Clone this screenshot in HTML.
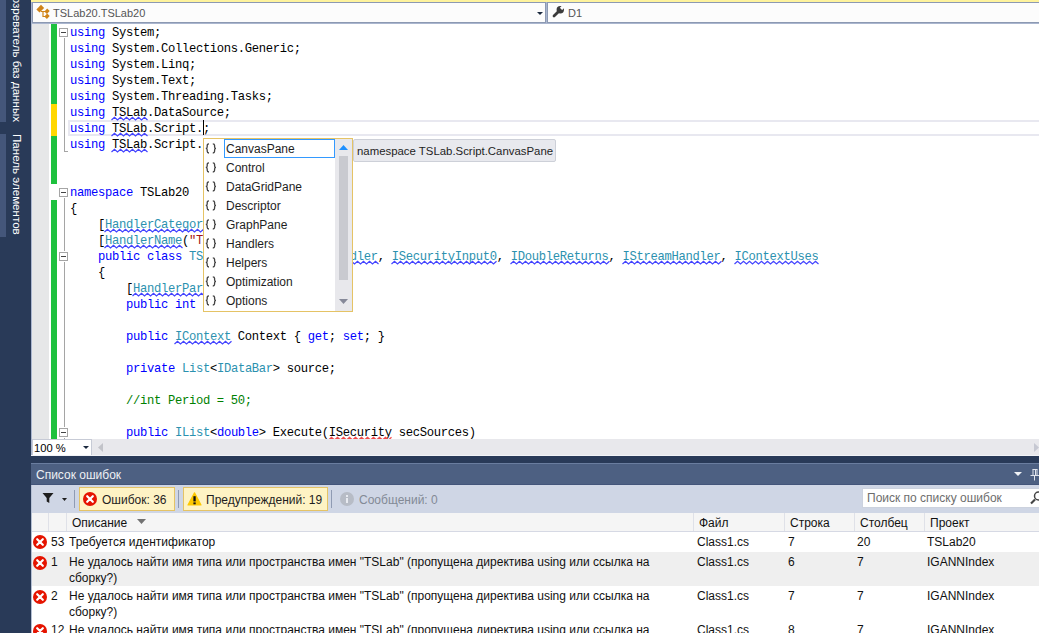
<!DOCTYPE html>
<html><head><meta charset="utf-8">
<style>
*{margin:0;padding:0;box-sizing:border-box}
html,body{width:1039px;height:633px;overflow:hidden;background:#293a58;font-family:"Liberation Sans",sans-serif;font-size:12px;position:relative}
.a{position:absolute}
.vt{position:absolute;color:#ffffff;font-size:12px;line-height:14px;white-space:nowrap;transform-origin:0 0;transform:rotate(90deg)}
.code{position:absolute;left:70px;top:25px;font-family:"Liberation Mono",monospace;font-size:12.2px;letter-spacing:-0.32px;line-height:16px;white-space:pre;color:#000}
.k{color:#0000ff}.t{color:#2b91af}.s{color:#a31515}.c{color:#008000}
.pi{font-family:"Liberation Mono",monospace;font-size:12px;line-height:19px;color:#424242;letter-spacing:2px}
.pt{line-height:21px;color:#1e1e1e}
.hdr{position:absolute;top:514px;line-height:18px;color:#111}
.cell{position:absolute;line-height:20px;color:#111}
</style></head><body>
<div class="a" style="left:0;top:0;width:6px;height:122px;background:#44567a"></div>
<div class="a" style="left:0;top:134px;width:6px;height:103px;background:#44567a"></div>
<div class="vt" style="left:24px;top:-19px;font-size:11.6px">Обозреватель баз данных</div>
<div class="vt" style="left:24px;top:134px;font-size:11.6px">Панель элементов</div>
<div class="a" style="left:31px;top:0;width:1008px;height:456px;background:#aab6cf"></div>
<div class="a" style="left:31px;top:0;width:1008px;height:2px;background:#fef39d"></div>
<div class="a" style="left:32px;top:2px;width:514px;height:21px;border:1px solid #8c99b2;background:#fcfcfc"></div>
<div class="a" style="left:547px;top:2px;width:492px;height:21px;border:1px solid #8c99b2;border-right:none;background:#fcfcfc"></div>
<svg class="a" style="left:35px;top:4px" width="16" height="16" viewBox="0 0 16 16"><g fill="#d08419"><rect x="2" y="2.5" width="6.5" height="4.5" transform="rotate(-45 5.2 4.7)"/><rect x="10" y="5.5" width="4" height="3.5" transform="rotate(-45 12 7.2)"/><rect x="10" y="10.5" width="4" height="3.5" transform="rotate(-45 12 12.2)"/></g><path d="M6 7.5 H11 M8 7.5 V12.5 H11" stroke="#d08419" stroke-width="1.2" fill="none"/></svg>
<div class="a" style="left:53px;top:5px;line-height:17px;color:#555;font-size:11px">TSLab20.TSLab20</div>
<svg class="a" style="left:537px;top:12px" width="6" height="3"><path d="M0 0 H6 L3 3 Z" fill="#1b293e"/></svg>
<svg class="a" style="left:552px;top:5px" width="13" height="13" viewBox="0 0 13 13"><path d="M2 11 L6.3 6.7" stroke="#3b3b3b" stroke-width="2.8" stroke-linecap="round"/><circle cx="8.3" cy="4.7" r="3.7" fill="#3b3b3b"/><rect x="9" y="0" width="3.2" height="4.6" fill="#fcfcfc" transform="rotate(45 10.6 2.3)"/></svg>
<div class="a" style="left:568px;top:5px;line-height:17px;color:#555;font-size:11px">D1</div>
<div class="a" style="left:32px;top:24px;width:1007px;height:415px;background:#fff;overflow:hidden">
</div>
<div class="a" style="left:32px;top:24px;width:17px;height:415px;background:#e6e7e8"></div>
<div class="a" style="left:51px;top:24px;width:6px;height:80px;background:#1ec13e"></div>
<div class="a" style="left:51px;top:104px;width:6px;height:32px;background:#ffd700"></div>
<div class="a" style="left:51px;top:136px;width:6px;height:48px;background:#1ec13e"></div>
<div class="a" style="left:51px;top:200px;width:6px;height:239px;background:#1ec13e"></div>
<div class="a" style="left:68px;top:120px;width:980px;height:16px;border:2px solid #e8e8f0;border-right:none"></div>
<div class="a" style="left:64px;top:37px;width:1px;height:115px;background:#a5a5a5"></div>
<div class="a" style="left:64px;top:151px;width:4px;height:1px;background:#a5a5a5"></div>
<div class="a" style="left:64px;top:197px;width:1px;height:242px;background:#a5a5a5"></div>
<div class="a" style="left:59px;top:28px;width:9px;height:9px;border:1px solid #a5a5a5;background:#fff;box-shadow:0 0 0 1px #fff"></div><div class="a" style="left:61px;top:32px;width:5px;height:1px;background:#444"></div>
<div class="a" style="left:59px;top:188px;width:9px;height:9px;border:1px solid #a5a5a5;background:#fff;box-shadow:0 0 0 1px #fff"></div><div class="a" style="left:61px;top:192px;width:5px;height:1px;background:#444"></div>
<div class="a" style="left:59px;top:252px;width:9px;height:9px;border:1px solid #a5a5a5;background:#fff;box-shadow:0 0 0 1px #fff"></div><div class="a" style="left:61px;top:256px;width:5px;height:1px;background:#444"></div>
<div class="a" style="left:59px;top:428px;width:9px;height:9px;border:1px solid #a5a5a5;background:#fff;box-shadow:0 0 0 1px #fff"></div><div class="a" style="left:61px;top:432px;width:5px;height:1px;background:#444"></div>
<div class="code" style="height:415px;overflow:hidden"><span class="k">using</span> System;
<span class="k">using</span> System.Collections.Generic;
<span class="k">using</span> System.Linq;
<span class="k">using</span> System.Text;
<span class="k">using</span> System.Threading.Tasks;
<span class="k">using</span> TSLab.DataSource;
<span class="k">using</span> TSLab.Script.;
<span class="k">using</span> TSLab.Script.Optimization;


<span class="k">namespace</span> TSLab20
{
    [<span class="t">HandlerCategory</span>("TSLab")]
    [<span class="t">HandlerName</span>(<span class="s">"TSLab20"</span>)]
    <span class="k">public</span> <span class="k">class</span> <span class="t">TSLab20</span> : <span class="t">IOneSourceHandler</span>, <span class="t">ISecurityInput0</span>, <span class="t">IDoubleReturns</span>, <span class="t">IStreamHandler</span>, <span class="t">IContextUses</span>
    {
        [<span class="t">HandlerParameter</span>(true)]
        <span class="k">public</span> <span class="k">int</span> Period

        <span class="k">public</span> <span class="t">IContext</span> Context { <span class="k">get</span>; <span class="k">set</span>; }

        <span class="k">private</span> <span class="t">List</span>&lt;<span class="t">IDataBar</span>&gt; source;

<span class="c">        //int Period = 50;</span>

        <span class="k">public</span> <span class="t">IList</span>&lt;<span class="k">double</span>&gt; Execute(ISecurity secSources)</div>
<svg class="a" style="left:0;top:0;overflow:visible" width="1039" height="439"><polyline points="111.5,120.0 114.5,117.3 117.5,120.0 120.5,117.3 123.5,120.0 126.5,117.3 129.5,120.0 132.5,117.3 135.5,120.0 138.5,117.3 141.5,120.0 144.5,117.3 147.5,120.0" fill="none" stroke="#4343ff" stroke-width="1.25"/>
<polyline points="111.5,136.0 114.5,133.3 117.5,136.0 120.5,133.3 123.5,136.0 126.5,133.3 129.5,136.0 132.5,133.3 135.5,136.0 138.5,133.3 141.5,136.0 144.5,133.3 147.5,136.0" fill="none" stroke="#4343ff" stroke-width="1.25"/>
<polyline points="111.5,152.0 114.5,149.3 117.5,152.0 120.5,149.3 123.5,152.0 126.5,149.3 129.5,152.0 132.5,149.3 135.5,152.0 138.5,149.3 141.5,152.0 144.5,149.3 147.5,152.0" fill="none" stroke="#4343ff" stroke-width="1.25"/>
<polyline points="104.5,232.0 107.5,229.3 110.5,232.0 113.5,229.3 116.5,232.0 119.5,229.3 122.5,232.0 125.5,229.3 128.5,232.0 131.5,229.3 134.5,232.0 137.5,229.3 140.5,232.0 143.5,229.3 146.5,232.0 149.5,229.3 152.5,232.0 155.5,229.3 158.5,232.0 161.5,229.3 164.5,232.0 167.5,229.3 170.5,232.0 173.5,229.3 176.5,232.0 179.5,229.3 182.5,232.0 185.5,229.3 188.5,232.0 191.5,229.3 194.5,232.0 197.5,229.3 200.5,232.0 203.5,229.3 206.5,232.0 209.5,229.3" fill="none" stroke="#4343ff" stroke-width="1.25"/>
<polyline points="104.5,248.0 107.5,245.3 110.5,248.0 113.5,245.3 116.5,248.0 119.5,245.3 122.5,248.0 125.5,245.3 128.5,248.0 131.5,245.3 134.5,248.0 137.5,245.3 140.5,248.0 143.5,245.3 146.5,248.0 149.5,245.3 152.5,248.0 155.5,245.3 158.5,248.0 161.5,245.3 164.5,248.0 167.5,245.3 170.5,248.0 173.5,245.3 176.5,248.0 179.5,245.3 182.5,248.0" fill="none" stroke="#4343ff" stroke-width="1.25"/>
<polyline points="258.5,264.0 261.5,261.3 264.5,264.0 267.5,261.3 270.5,264.0 273.5,261.3 276.5,264.0 279.5,261.3 282.5,264.0 285.5,261.3 288.5,264.0 291.5,261.3 294.5,264.0 297.5,261.3 300.5,264.0 303.5,261.3 306.5,264.0 309.5,261.3 312.5,264.0 315.5,261.3 318.5,264.0 321.5,261.3 324.5,264.0 327.5,261.3 330.5,264.0 333.5,261.3 336.5,264.0 339.5,261.3 342.5,264.0 345.5,261.3 348.5,264.0 351.5,261.3 354.5,264.0 357.5,261.3 360.5,264.0 363.5,261.3 366.5,264.0 369.5,261.3 372.5,264.0 375.5,261.3 378.5,264.0" fill="none" stroke="#4343ff" stroke-width="1.25"/>
<polyline points="391.5,264.0 394.5,261.3 397.5,264.0 400.5,261.3 403.5,264.0 406.5,261.3 409.5,264.0 412.5,261.3 415.5,264.0 418.5,261.3 421.5,264.0 424.5,261.3 427.5,264.0 430.5,261.3 433.5,264.0 436.5,261.3 439.5,264.0 442.5,261.3 445.5,264.0 448.5,261.3 451.5,264.0 454.5,261.3 457.5,264.0 460.5,261.3 463.5,264.0 466.5,261.3 469.5,264.0 472.5,261.3 475.5,264.0 478.5,261.3 481.5,264.0 484.5,261.3 487.5,264.0 490.5,261.3 493.5,264.0 496.5,261.3" fill="none" stroke="#4343ff" stroke-width="1.25"/>
<polyline points="510.5,264.0 513.5,261.3 516.5,264.0 519.5,261.3 522.5,264.0 525.5,261.3 528.5,264.0 531.5,261.3 534.5,264.0 537.5,261.3 540.5,264.0 543.5,261.3 546.5,264.0 549.5,261.3 552.5,264.0 555.5,261.3 558.5,264.0 561.5,261.3 564.5,264.0 567.5,261.3 570.5,264.0 573.5,261.3 576.5,264.0 579.5,261.3 582.5,264.0 585.5,261.3 588.5,264.0 591.5,261.3 594.5,264.0 597.5,261.3 600.5,264.0 603.5,261.3 606.5,264.0 609.5,261.3" fill="none" stroke="#4343ff" stroke-width="1.25"/>
<polyline points="622.5,264.0 625.5,261.3 628.5,264.0 631.5,261.3 634.5,264.0 637.5,261.3 640.5,264.0 643.5,261.3 646.5,264.0 649.5,261.3 652.5,264.0 655.5,261.3 658.5,264.0 661.5,261.3 664.5,264.0 667.5,261.3 670.5,264.0 673.5,261.3 676.5,264.0 679.5,261.3 682.5,264.0 685.5,261.3 688.5,264.0 691.5,261.3 694.5,264.0 697.5,261.3 700.5,264.0 703.5,261.3 706.5,264.0 709.5,261.3 712.5,264.0 715.5,261.3 718.5,264.0 721.5,261.3" fill="none" stroke="#4343ff" stroke-width="1.25"/>
<polyline points="734.5,264.0 737.5,261.3 740.5,264.0 743.5,261.3 746.5,264.0 749.5,261.3 752.5,264.0 755.5,261.3 758.5,264.0 761.5,261.3 764.5,264.0 767.5,261.3 770.5,264.0 773.5,261.3 776.5,264.0 779.5,261.3 782.5,264.0 785.5,261.3 788.5,264.0 791.5,261.3 794.5,264.0 797.5,261.3 800.5,264.0 803.5,261.3 806.5,264.0 809.5,261.3 812.5,264.0 815.5,261.3 818.5,264.0" fill="none" stroke="#4343ff" stroke-width="1.25"/>
<polyline points="132.5,296.0 135.5,293.3 138.5,296.0 141.5,293.3 144.5,296.0 147.5,293.3 150.5,296.0 153.5,293.3 156.5,296.0 159.5,293.3 162.5,296.0 165.5,293.3 168.5,296.0 171.5,293.3 174.5,296.0 177.5,293.3 180.5,296.0 183.5,293.3 186.5,296.0 189.5,293.3 192.5,296.0 195.5,293.3 198.5,296.0 201.5,293.3 204.5,296.0 207.5,293.3 210.5,296.0 213.5,293.3 216.5,296.0 219.5,293.3 222.5,296.0 225.5,293.3 228.5,296.0 231.5,293.3 234.5,296.0 237.5,293.3 240.5,296.0 243.5,293.3 246.5,296.0" fill="none" stroke="#4343ff" stroke-width="1.25"/>
<polyline points="174.5,344.0 177.5,341.3 180.5,344.0 183.5,341.3 186.5,344.0 189.5,341.3 192.5,344.0 195.5,341.3 198.5,344.0 201.5,341.3 204.5,344.0 207.5,341.3 210.5,344.0 213.5,341.3 216.5,344.0 219.5,341.3 222.5,344.0 225.5,341.3 228.5,344.0 231.5,341.3" fill="none" stroke="#4343ff" stroke-width="1.25"/>
<polyline points="328.5,440.0 331.5,437.3 334.5,440.0 337.5,437.3 340.5,440.0 343.5,437.3 346.5,440.0 349.5,437.3 352.5,440.0 355.5,437.3 358.5,440.0 361.5,437.3 364.5,440.0 367.5,437.3 370.5,440.0 373.5,437.3 376.5,440.0 379.5,437.3 382.5,440.0 385.5,437.3 388.5,440.0 391.5,437.3" fill="none" stroke="#f04a4a" stroke-width="1.25"/></svg>
<div class="a" style="left:203px;top:120px;width:1px;height:15px;background:#000"></div>
<div class="a" style="left:203px;top:138px;width:150px;height:174px;border:1px solid #e5c365;background:#fff"></div>
<div class="a" style="left:335px;top:139px;width:17px;height:172px;background:#e8e8ec"></div>
<div class="a" style="left:339px;top:156px;width:9px;height:124px;background:#c9cad0"></div>
<svg class="a" style="left:335px;top:139px" width="17" height="172"><path d="M4 11 L13 11 L8.5 6 Z" fill="#1e90ff"/><path d="M4 160 L13 160 L8.5 165 Z" fill="#868999"/></svg>
<div class="a" style="left:224px;top:139px;width:111px;height:19px;border:1px solid #3399ff;background:#fff"></div>
<svg class="a" style="left:205px;top:143px" width="12" height="12" viewBox="0 0 12 12"><path d="M4 0.8 Q2.2 0.8 2.2 2.6 V3.9 Q2.2 5.4 0.8 5.4 Q2.2 5.4 2.2 6.9 V8.2 Q2.2 10 4 10 M7.8 0.8 Q9.6 0.8 9.6 2.6 V3.9 Q9.6 5.4 11 5.4 Q9.6 5.4 9.6 6.9 V8.2 Q9.6 10 7.8 10" fill="none" stroke="#424242" stroke-width="1.3"/></svg>
<div class="a pt" style="left:226px;top:139px">CanvasPane</div>
<svg class="a" style="left:205px;top:162px" width="12" height="12" viewBox="0 0 12 12"><path d="M4 0.8 Q2.2 0.8 2.2 2.6 V3.9 Q2.2 5.4 0.8 5.4 Q2.2 5.4 2.2 6.9 V8.2 Q2.2 10 4 10 M7.8 0.8 Q9.6 0.8 9.6 2.6 V3.9 Q9.6 5.4 11 5.4 Q9.6 5.4 9.6 6.9 V8.2 Q9.6 10 7.8 10" fill="none" stroke="#424242" stroke-width="1.3"/></svg>
<div class="a pt" style="left:226px;top:158px">Control</div>
<svg class="a" style="left:205px;top:181px" width="12" height="12" viewBox="0 0 12 12"><path d="M4 0.8 Q2.2 0.8 2.2 2.6 V3.9 Q2.2 5.4 0.8 5.4 Q2.2 5.4 2.2 6.9 V8.2 Q2.2 10 4 10 M7.8 0.8 Q9.6 0.8 9.6 2.6 V3.9 Q9.6 5.4 11 5.4 Q9.6 5.4 9.6 6.9 V8.2 Q9.6 10 7.8 10" fill="none" stroke="#424242" stroke-width="1.3"/></svg>
<div class="a pt" style="left:226px;top:177px">DataGridPane</div>
<svg class="a" style="left:205px;top:200px" width="12" height="12" viewBox="0 0 12 12"><path d="M4 0.8 Q2.2 0.8 2.2 2.6 V3.9 Q2.2 5.4 0.8 5.4 Q2.2 5.4 2.2 6.9 V8.2 Q2.2 10 4 10 M7.8 0.8 Q9.6 0.8 9.6 2.6 V3.9 Q9.6 5.4 11 5.4 Q9.6 5.4 9.6 6.9 V8.2 Q9.6 10 7.8 10" fill="none" stroke="#424242" stroke-width="1.3"/></svg>
<div class="a pt" style="left:226px;top:196px">Descriptor</div>
<svg class="a" style="left:205px;top:219px" width="12" height="12" viewBox="0 0 12 12"><path d="M4 0.8 Q2.2 0.8 2.2 2.6 V3.9 Q2.2 5.4 0.8 5.4 Q2.2 5.4 2.2 6.9 V8.2 Q2.2 10 4 10 M7.8 0.8 Q9.6 0.8 9.6 2.6 V3.9 Q9.6 5.4 11 5.4 Q9.6 5.4 9.6 6.9 V8.2 Q9.6 10 7.8 10" fill="none" stroke="#424242" stroke-width="1.3"/></svg>
<div class="a pt" style="left:226px;top:215px">GraphPane</div>
<svg class="a" style="left:205px;top:238px" width="12" height="12" viewBox="0 0 12 12"><path d="M4 0.8 Q2.2 0.8 2.2 2.6 V3.9 Q2.2 5.4 0.8 5.4 Q2.2 5.4 2.2 6.9 V8.2 Q2.2 10 4 10 M7.8 0.8 Q9.6 0.8 9.6 2.6 V3.9 Q9.6 5.4 11 5.4 Q9.6 5.4 9.6 6.9 V8.2 Q9.6 10 7.8 10" fill="none" stroke="#424242" stroke-width="1.3"/></svg>
<div class="a pt" style="left:226px;top:234px">Handlers</div>
<svg class="a" style="left:205px;top:257px" width="12" height="12" viewBox="0 0 12 12"><path d="M4 0.8 Q2.2 0.8 2.2 2.6 V3.9 Q2.2 5.4 0.8 5.4 Q2.2 5.4 2.2 6.9 V8.2 Q2.2 10 4 10 M7.8 0.8 Q9.6 0.8 9.6 2.6 V3.9 Q9.6 5.4 11 5.4 Q9.6 5.4 9.6 6.9 V8.2 Q9.6 10 7.8 10" fill="none" stroke="#424242" stroke-width="1.3"/></svg>
<div class="a pt" style="left:226px;top:253px">Helpers</div>
<svg class="a" style="left:205px;top:276px" width="12" height="12" viewBox="0 0 12 12"><path d="M4 0.8 Q2.2 0.8 2.2 2.6 V3.9 Q2.2 5.4 0.8 5.4 Q2.2 5.4 2.2 6.9 V8.2 Q2.2 10 4 10 M7.8 0.8 Q9.6 0.8 9.6 2.6 V3.9 Q9.6 5.4 11 5.4 Q9.6 5.4 9.6 6.9 V8.2 Q9.6 10 7.8 10" fill="none" stroke="#424242" stroke-width="1.3"/></svg>
<div class="a pt" style="left:226px;top:272px">Optimization</div>
<svg class="a" style="left:205px;top:295px" width="12" height="12" viewBox="0 0 12 12"><path d="M4 0.8 Q2.2 0.8 2.2 2.6 V3.9 Q2.2 5.4 0.8 5.4 Q2.2 5.4 2.2 6.9 V8.2 Q2.2 10 4 10 M7.8 0.8 Q9.6 0.8 9.6 2.6 V3.9 Q9.6 5.4 11 5.4 Q9.6 5.4 9.6 6.9 V8.2 Q9.6 10 7.8 10" fill="none" stroke="#424242" stroke-width="1.3"/></svg>
<div class="a pt" style="left:226px;top:291px">Options</div>
<div class="a" style="left:353px;top:139px;width:203px;height:23px;border:1px solid #cdd0d8;border-radius:2px;background:#e8e9ee;color:#1e1e1e;padding-left:3px;line-height:22px;white-space:nowrap;font-size:11.4px">namespace TSLab.Script.CanvasPane</div>
<div class="a" style="left:32px;top:439px;width:1007px;height:17px;background:#e8e8ec"></div>
<div class="a" style="left:32px;top:439px;width:60px;height:17px;border:1px solid #c7cbd6;background:#fff"></div>
<div class="a" style="left:34px;top:440px;line-height:16px;color:#000;font-size:11.2px">100 %</div>
<svg class="a" style="left:83px;top:446px" width="6" height="3"><path d="M0 0 H6 L3 3 Z" fill="#1b293e"/></svg>
<svg class="a" style="left:98px;top:443px" width="5" height="9"><path d="M5 0 V9 L0 4.5 Z" fill="#c2c3c9"/></svg>
<svg class="a" style="left:1034px;top:443px" width="5" height="9"><path d="M0 0 V9 L5 4.5 Z" fill="#c6c8d2"/></svg>
<div class="a" style="left:31px;top:455px;width:1008px;height:1px;background:#f2f3f7"></div>
<div class="a" style="left:31px;top:463px;width:1008px;height:170px;background:#fff"></div>
<div class="a" style="left:31px;top:463px;width:1008px;height:22px;background:#4d6082;border-top:1px solid #6a7d9f;border-bottom:1px solid #43557a"></div>
<div class="a" style="left:36px;top:466px;line-height:19px;color:#eef0f4">Список ошибок</div>
<svg class="a" style="left:1014px;top:472px" width="8" height="4"><path d="M0 0 H8 L4 4 Z" fill="#f0f2f6"/></svg>
<div class="a" style="left:31px;top:485px;width:1008px;height:28px;background:#cfd6e5"></div>
<svg class="a" style="left:42px;top:492px" width="12" height="12" viewBox="0 0 12 12"><path d="M0.5 1 H11.5 L7.3 6 V11 L4.7 9.5 V6 Z" fill="#1e1e1e"/></svg>
<svg class="a" style="left:62px;top:498px" width="5" height="3"><path d="M0 0 H5 L2.5 3 Z" fill="#1e1e1e"/></svg>
<div class="a" style="left:74px;top:490px;width:1px;height:18px;background:#8f9bb3"></div>
<div class="a" style="left:79px;top:487px;width:96px;height:24px;border:1px solid #e5c365;background:#fef3c4"></div>
<svg class="a" style="left:83px;top:492px" width="14" height="14" viewBox="0 0 14 14"><circle cx="7" cy="7" r="7" fill="#e51400"/><path d="M4.2 4.2 L9.8 9.8 M9.8 4.2 L4.2 9.8" stroke="#fff" stroke-width="2.2" stroke-linecap="round"/></svg>
<div class="a" style="left:102px;top:491px;line-height:18px;color:#1e1e1e">Ошибок: 36</div>
<div class="a" style="left:178px;top:490px;width:1px;height:18px;background:#8f9bb3"></div>
<div class="a" style="left:183px;top:487px;width:145px;height:24px;border:1px solid #e5c365;background:#fef3c4"></div>
<svg class="a" style="left:187px;top:492px" width="15" height="14" viewBox="0 0 15 14"><path d="M7.5 0.8 L14 13 H1 Z" fill="#fdc800" stroke="#fdc800" stroke-width="1.2" stroke-linejoin="round"/><rect x="6.4" y="4.2" width="2.3" height="5.2" fill="#111"/><rect x="6.4" y="10.4" width="2.3" height="1.9" fill="#111"/></svg>
<div class="a" style="left:206px;top:491px;line-height:18px;color:#1e1e1e">Предупреждений: 19</div>
<div class="a" style="left:331px;top:490px;width:1px;height:18px;background:#8f9bb3"></div>
<svg class="a" style="left:340px;top:492px" width="14" height="14" viewBox="0 0 14 14"><circle cx="7" cy="7" r="7" fill="#b7bcc6"/><rect x="6" y="6" width="2" height="5" fill="#e8ebf1"/><rect x="6" y="3" width="2" height="2" fill="#e8ebf1"/></svg>
<div class="a" style="left:359px;top:491px;line-height:18px;color:#838a96">Сообщений: 0</div>
<div class="a" style="left:862px;top:488px;width:180px;height:20px;border:1px solid #ccd2de;background:#fff"></div>
<div class="a" style="left:867px;top:489px;line-height:18px;color:#6d6d6d">Поиск по списку ошибок</div>
<svg class="a" style="left:1030px;top:469px" width="9" height="12" viewBox="0 0 9 12"><path d="M2.5 0.5 H7.5 M3 0.5 V6.5 M7 0.5 V6.5 M0.5 6.5 H9 M4.5 6.5 V11.5 M5.5 0.5 V6" stroke="#dfe3ec" stroke-width="1" fill="none"/></svg>
<svg class="a" style="left:1030px;top:490px" width="12" height="16" viewBox="0 0 12 16"><path d="M1 13.5 L5 9.5" stroke="#444" stroke-width="2.2"/><circle cx="8.5" cy="6" r="4" fill="none" stroke="#444" stroke-width="1.5"/></svg>
<div class="a" style="left:31px;top:513px;width:1008px;height:19px;background:#f5f5f5;border-bottom:1px solid #d6d9e4"></div>
<div class="a" style="left:48px;top:513px;width:1px;height:18px;background:#dfe1e8"></div>
<div class="a" style="left:66px;top:513px;width:1px;height:18px;background:#dfe1e8"></div>
<div class="a" style="left:693px;top:513px;width:1px;height:18px;background:#dfe1e8"></div>
<div class="a" style="left:784px;top:513px;width:1px;height:18px;background:#dfe1e8"></div>
<div class="a" style="left:854px;top:513px;width:1px;height:18px;background:#dfe1e8"></div>
<div class="a" style="left:924px;top:513px;width:1px;height:18px;background:#dfe1e8"></div>
<div class="hdr" style="left:72px">Описание</div>
<svg class="a" style="left:137px;top:519px" width="9" height="5"><path d="M0 0 H9 L4.5 5 Z" fill="#727272"/></svg>
<div class="hdr" style="left:699px">Файл</div>
<div class="hdr" style="left:790px">Строка</div>
<div class="hdr" style="left:860px">Столбец</div>
<div class="hdr" style="left:930px">Проект</div>
<div class="a" style="left:32px;top:552px;width:1007px;height:34px;background:#efefef"></div>
<svg class="a" style="left:33px;top:535px" width="14" height="14" viewBox="0 0 14 14"><circle cx="7" cy="7" r="7" fill="#e51400"/><path d="M4.2 4.2 L9.8 9.8 M9.8 4.2 L4.2 9.8" stroke="#fff" stroke-width="2.2" stroke-linecap="round"/></svg>
<div class="cell" style="left:51px;top:532px">53</div>
<div class="cell" style="left:69px;top:532px">Требуется идентификатор</div>
<div class="cell" style="left:697px;top:532px">Class1.cs</div>
<div class="cell" style="left:788px;top:532px">7</div>
<div class="cell" style="left:857px;top:532px">20</div>
<div class="cell" style="left:927px;top:532px">TSLab20</div>
<svg class="a" style="left:33px;top:556px" width="14" height="14" viewBox="0 0 14 14"><circle cx="7" cy="7" r="7" fill="#e51400"/><path d="M4.2 4.2 L9.8 9.8 M9.8 4.2 L4.2 9.8" stroke="#fff" stroke-width="2.2" stroke-linecap="round"/></svg>
<div class="cell" style="left:51px;top:552px">1</div>
<div class="cell" style="left:69px;top:552px">Не удалось найти имя типа или пространства имен "TSLab" (пропущена директива using или ссылка на</div>
<div class="cell" style="left:69px;top:568px">сборку?)</div>
<div class="cell" style="left:697px;top:552px">Class1.cs</div>
<div class="cell" style="left:788px;top:552px">6</div>
<div class="cell" style="left:857px;top:552px">7</div>
<div class="cell" style="left:927px;top:552px">IGANNIndex</div>
<svg class="a" style="left:33px;top:590px" width="14" height="14" viewBox="0 0 14 14"><circle cx="7" cy="7" r="7" fill="#e51400"/><path d="M4.2 4.2 L9.8 9.8 M9.8 4.2 L4.2 9.8" stroke="#fff" stroke-width="2.2" stroke-linecap="round"/></svg>
<div class="cell" style="left:51px;top:586px">2</div>
<div class="cell" style="left:69px;top:586px">Не удалось найти имя типа или пространства имен "TSLab" (пропущена директива using или ссылка на</div>
<div class="cell" style="left:69px;top:602px">сборку?)</div>
<div class="cell" style="left:697px;top:586px">Class1.cs</div>
<div class="cell" style="left:788px;top:586px">7</div>
<div class="cell" style="left:857px;top:586px">7</div>
<div class="cell" style="left:927px;top:586px">IGANNIndex</div>
<svg class="a" style="left:33px;top:624px" width="14" height="14" viewBox="0 0 14 14"><circle cx="7" cy="7" r="7" fill="#e51400"/><path d="M4.2 4.2 L9.8 9.8 M9.8 4.2 L4.2 9.8" stroke="#fff" stroke-width="2.2" stroke-linecap="round"/></svg>
<div class="cell" style="left:51px;top:620px">12</div>
<div class="cell" style="left:69px;top:620px">Не удалось найти имя типа или пространства имен "TSLab" (пропущена директива using или ссылка на</div>
<div class="cell" style="left:69px;top:636px">сборку?)</div>
<div class="cell" style="left:697px;top:620px">Class1.cs</div>
<div class="cell" style="left:788px;top:620px">8</div>
<div class="cell" style="left:857px;top:620px">7</div>
<div class="cell" style="left:927px;top:620px">IGANNIndex</div>
<div class="a" style="left:31px;top:485px;width:1px;height:148px;background:#b4bfd3"></div>
</body></html>
